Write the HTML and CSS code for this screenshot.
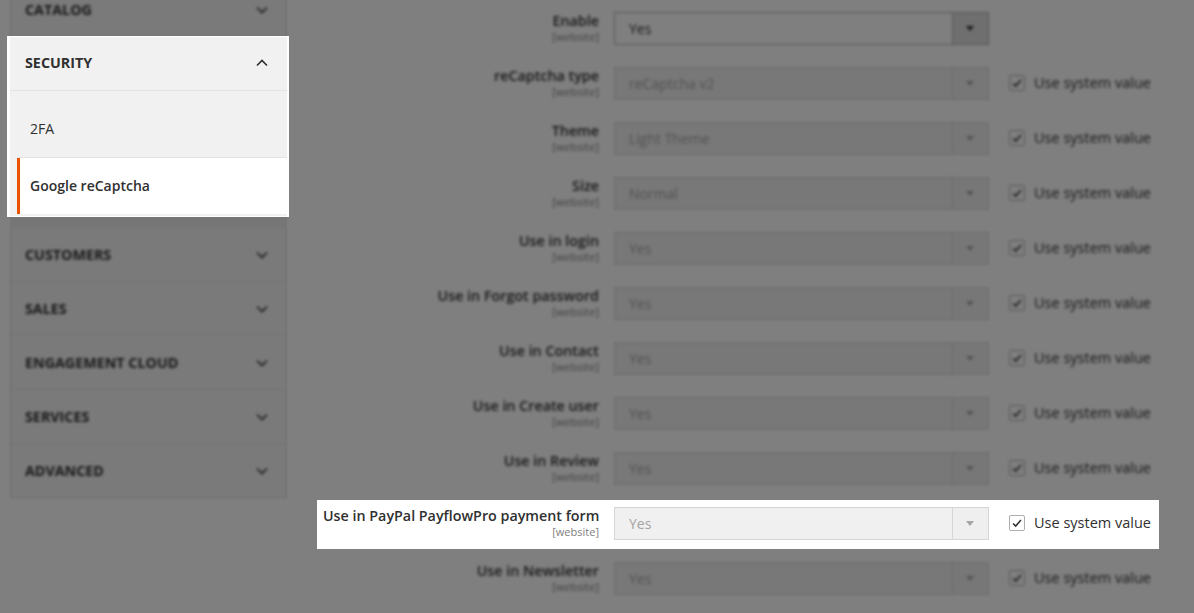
FILE: index.html
```html
<!DOCTYPE html>
<html lang="en">
<head>
    <meta charset="UTF-8">
    <meta name="viewport" content="width=device-width, initial-scale=1.0">
    <title>Configuration - Google reCaptcha</title>
    <link rel="stylesheet" href="styles.css">
</head>
<body>

    <div class="page">
        <aside class="nav">
            <div class="nav-block blur first">
                <div class="nav-title">Catalog
                    <svg class="chev" viewBox="0 0 12 8"><polyline points="1,1.5 6,6.5 11,1.5"/></svg>
                </div>
            </div>

            <!-- highlighted section -->
            <div class="spot">
                <div class="nav-block open">
                    <div class="nav-title">Security
                        <svg class="chev" viewBox="0 0 12 8"><polyline points="1,6.5 6,1.5 11,6.5"/></svg>
                    </div>
                    <ul class="nav-items">
                        <li>2FA</li>
                        <li class="active">Google reCaptcha</li>
                    </ul>
                </div>
            </div>

            <div class="nav-block blur">
                <div class="nav-title">Customers
                    <svg class="chev" viewBox="0 0 12 8"><polyline points="1,1.5 6,6.5 11,1.5"/></svg>
                </div>
            </div>
            <div class="nav-block blur">
                <div class="nav-title">Sales
                    <svg class="chev" viewBox="0 0 12 8"><polyline points="1,1.5 6,6.5 11,1.5"/></svg>
                </div>
            </div>
            <div class="nav-block blur">
                <div class="nav-title">Engagement Cloud
                    <svg class="chev" viewBox="0 0 12 8"><polyline points="1,1.5 6,6.5 11,1.5"/></svg>
                </div>
            </div>
            <div class="nav-block blur">
                <div class="nav-title">Services
                    <svg class="chev" viewBox="0 0 12 8"><polyline points="1,1.5 6,6.5 11,1.5"/></svg>
                </div>
            </div>
            <div class="nav-block blur">
                <div class="nav-title">Advanced
                    <svg class="chev" viewBox="0 0 12 8"><polyline points="1,1.5 6,6.5 11,1.5"/></svg>
                </div>
            </div>
        </aside>

        <main class="form">
            <div class="row blur">
                <div class="label"><span>Enable</span><small>[website]</small></div>
                <div class="select"><span class="value">Yes</span><span class="arrow"></span></div>
            </div>

            <div class="row blur">
                <div class="label"><span>reCaptcha type</span><small>[website]</small></div>
                <div class="select disabled"><span class="value">reCaptcha v2</span><span class="arrow"></span></div>
                <div class="inherit"><span class="check"><svg viewBox="0 0 16 16"><polyline points="3.5,8.5 6.5,11.5 12.5,4.5"/></svg></span>Use system value</div>
            </div>

            <div class="row blur">
                <div class="label"><span>Theme</span><small>[website]</small></div>
                <div class="select disabled"><span class="value">Light Theme</span><span class="arrow"></span></div>
                <div class="inherit"><span class="check"><svg viewBox="0 0 16 16"><polyline points="3.5,8.5 6.5,11.5 12.5,4.5"/></svg></span>Use system value</div>
            </div>

            <div class="row blur">
                <div class="label"><span>Size</span><small>[website]</small></div>
                <div class="select disabled"><span class="value">Normal</span><span class="arrow"></span></div>
                <div class="inherit"><span class="check"><svg viewBox="0 0 16 16"><polyline points="3.5,8.5 6.5,11.5 12.5,4.5"/></svg></span>Use system value</div>
            </div>

            <div class="row blur">
                <div class="label"><span>Use in login</span><small>[website]</small></div>
                <div class="select disabled"><span class="value">Yes</span><span class="arrow"></span></div>
                <div class="inherit"><span class="check"><svg viewBox="0 0 16 16"><polyline points="3.5,8.5 6.5,11.5 12.5,4.5"/></svg></span>Use system value</div>
            </div>

            <div class="row blur">
                <div class="label"><span>Use in Forgot password</span><small>[website]</small></div>
                <div class="select disabled"><span class="value">Yes</span><span class="arrow"></span></div>
                <div class="inherit"><span class="check"><svg viewBox="0 0 16 16"><polyline points="3.5,8.5 6.5,11.5 12.5,4.5"/></svg></span>Use system value</div>
            </div>

            <div class="row blur">
                <div class="label"><span>Use in Contact</span><small>[website]</small></div>
                <div class="select disabled"><span class="value">Yes</span><span class="arrow"></span></div>
                <div class="inherit"><span class="check"><svg viewBox="0 0 16 16"><polyline points="3.5,8.5 6.5,11.5 12.5,4.5"/></svg></span>Use system value</div>
            </div>

            <div class="row blur">
                <div class="label"><span>Use in Create user</span><small>[website]</small></div>
                <div class="select disabled"><span class="value">Yes</span><span class="arrow"></span></div>
                <div class="inherit"><span class="check"><svg viewBox="0 0 16 16"><polyline points="3.5,8.5 6.5,11.5 12.5,4.5"/></svg></span>Use system value</div>
            </div>

            <div class="row blur">
                <div class="label"><span>Use in Review</span><small>[website]</small></div>
                <div class="select disabled"><span class="value">Yes</span><span class="arrow"></span></div>
                <div class="inherit"><span class="check"><svg viewBox="0 0 16 16"><polyline points="3.5,8.5 6.5,11.5 12.5,4.5"/></svg></span>Use system value</div>
            </div>

            <!-- highlighted row -->
            <div class="row spot-row">
                <div class="label"><span>Use in PayPal PayflowPro payment form</span><small>[website]</small></div>
                <div class="select disabled"><span class="value">Yes</span><span class="arrow"></span></div>
                <div class="inherit"><span class="check"><svg viewBox="0 0 16 16"><polyline points="3.5,8.5 6.5,11.5 12.5,4.5"/></svg></span>Use system value</div>
            </div>

            <div class="row blur">
                <div class="label"><span>Use in Newsletter</span><small>[website]</small></div>
                <div class="select disabled"><span class="value">Yes</span><span class="arrow"></span></div>
                <div class="inherit"><span class="check"><svg viewBox="0 0 16 16"><polyline points="3.5,8.5 6.5,11.5 12.5,4.5"/></svg></span>Use system value</div>
            </div>
        </main>
    </div>

    <div class="shade"></div>

</body>
</html>
```

FILE: styles.css
```css
body {
    margin: 0;
    background-color: #fff;
    font-family: "Open Sans", "Liberation Sans", sans-serif;
    color: #303030;
    overflow: hidden;
}

.page {
    display: flex;
    align-items: flex-start;
}

/* dark layer over everything except the highlighted parts */
.shade {
    position: fixed;
    inset: 0;
    background-color: rgba(0, 0, 0, 0.5);
    z-index: 2;
}

.blur {
    filter: blur(1.4px);
}

/* ---------- sidebar ---------- */
.nav {
    width: 277px;
    margin-left: 10px;
    background-color: #ededed;
}

.nav-block {
    background-color: #f5f5f5;
    box-shadow: inset 1px 0 0 #e6e6e6, inset -1px 0 0 #e6e6e6;
}

.nav-block.first {
    margin-top: -17px;
}

.nav-title {
    height: 53px;
    border-bottom: 1px solid #e3e3e3;
    display: flex;
    align-items: center;
    justify-content: space-between;
    padding: 0 19px 0 15px;
    font-size: 14.3px;
    font-weight: 700;
    text-transform: uppercase;
}

.nav-block.open .nav-title {
    padding-bottom: 2px;
    height: 51px;
}

.chev {
    width: 12px;
    height: 8px;
    fill: none;
    stroke: #303030;
    stroke-width: 1.6;
}

.spot {
    position: relative;
    z-index: 3;
    background-color: #fff;
    padding: 1px 2px 1px 3px;
    margin: -1px -2px 11px -3px;
}

.nav-block.open {
    background-color: #f1f1f1;
    box-shadow: none;
}

.nav-items {
    list-style: none;
    margin: 0;
    padding: 10px 0 2px 0;
}

.nav-items li {
    height: 56px;
    line-height: 56px;
    margin-left: 7px;
    padding-left: 10px;
    border-left: 3px solid transparent;
    border-bottom: 1px solid #e3e3e3;
    font-size: 14px;
}

.nav-items li:last-child {
    border-bottom: none;
}

.nav-items li.active {
    background-color: #fff;
    border-left-color: #eb5202;
    font-weight: 600;
}

/* ---------- form rows ---------- */
.form {
    display: flex;
    flex-direction: column;
    align-items: flex-start;
    padding: 5px 0 0 30px;
}

.row {
    display: grid;
    grid-template-columns: 276px 375px auto;
    column-gap: 15px;
    height: 49px;
    margin-bottom: 6px;
    padding: 0 8px 0 6px;
}

.spot-row {
    position: relative;
    z-index: 3;
    background-color: #fff;
}

.label {
    text-align: right;
    padding-top: 7px;
}

.label span {
    display: block;
    font-size: 14.3px;
    font-weight: 600;
    line-height: 18px;
    white-space: nowrap;
}

.label small {
    display: block;
    font-size: 11px;
    line-height: 13px;
    color: #808080;
}

.select {
    margin-top: 7px;
    height: 33px;
    box-sizing: border-box;
    display: flex;
    border: 1px solid #adadad;
    background-color: #fff;
}

.select .value {
    flex: 1;
    padding-left: 14px;
    line-height: 31px;
    font-size: 14px;
}

.select .arrow {
    width: 35px;
    border-left: 1px solid #adadad;
    background-color: #dedede;
    position: relative;
}

.select .arrow::after {
    content: "";
    position: absolute;
    left: 13px;
    top: 13px;
    border-left: 4px solid transparent;
    border-right: 4px solid transparent;
    border-top: 5px solid #303030;
}

.select.disabled {
    background-color: #f0f0f0;
    border-color: #d6d6d6;
}

.select.disabled .value {
    color: #a3a3a3;
}

.select.disabled .arrow {
    background-color: #efefef;
    border-left-color: #d6d6d6;
}

.select.disabled .arrow::after {
    border-top-color: #a6a6a6;
}

.inherit {
    margin: 6px 0 0 5px;
    height: 33px;
    display: flex;
    align-items: center;
    gap: 9px;
    font-size: 14.5px;
    white-space: nowrap;
}

.check {
    width: 16px;
    height: 16px;
    box-sizing: border-box;
    border: 1px solid #adadad;
    border-radius: 2px;
    background-color: #fff;
    display: flex;
}

.check svg {
    width: 14px;
    height: 14px;
    fill: none;
    stroke: #303030;
    stroke-width: 1.8;
}
```
